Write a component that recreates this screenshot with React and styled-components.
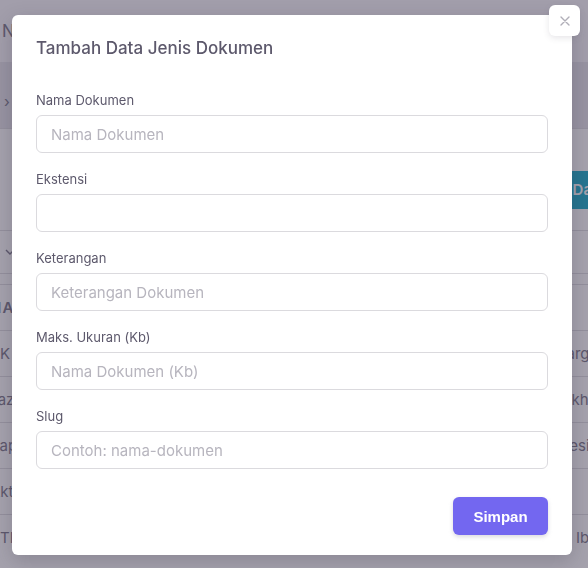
import React from 'react';
import styled, { createGlobalStyle } from 'styled-components';

const GlobalStyle = createGlobalStyle`
  html, body {
    margin: 0;
    padding: 0;
    overflow: hidden;
  }
  body {
    font-family: Inter, "Noto Sans", "Liberation Sans", sans-serif;
    background: #f8f7fa;
    color: #5d596c;
  }
  * { box-sizing: border-box; }
`;

const fields = [
  { label: 'Nama Dokumen', placeholder: 'Nama Dokumen' },
  { label: 'Ekstensi', placeholder: '' },
  { label: 'Keterangan', placeholder: 'Keterangan Dokumen' },
  { label: 'Maks. Ukuran (Kb)', placeholder: 'Nama Dokumen (Kb)' },
  { label: 'Slug', placeholder: 'Contoh: nama-dokumen' },
];

const rows = [
  { name: 'KK', desc: 'Kartu Keluarga' },
  { name: 'Ijazah', desc: 'Ijazah Terakhir' },
  { name: 'Rapor', desc: 'Rapor Indonesia' },
  { name: 'Akta', desc: '' },
  { name: 'KTP', desc: 'KTP Anak Ibu' },
];

// Page sitting behind the dialog
const Page = styled.div`
  width: 620px;
  margin-left: -10px;
  min-height: 568px;
  display: flex;
  flex-direction: column;
`;

const PageTitle = styled.div`
  height: 62px;
  display: flex;
  align-items: center;
  padding-left: 12px;
  font-size: 17px;
  color: #6f6b7d;
`;

const Breadcrumb = styled.div`
  height: 66px;
  display: flex;
  align-items: center;
  padding: 12px 0 0 14px;
  background: #e4e2e9;
  color: #6f6b7d;
  font-size: 15px;
`;

const Card = styled.div`
  background: #fff;
  flex: 1;
`;

const Toolbar = styled.div`
  height: 102px;
  display: flex;
  align-items: center;
  justify-content: space-between;
  padding-top: 20px;
  border-top: 1px solid #dbdade;
`;

const ToolbarText = styled.span`
  font-size: 15px;
  color: #6f6b7d;
`;

const TealButton = styled.button`
  height: 38px;
  margin-right: -12px;
  padding: 0 16px;
  border: none;
  border-radius: 6px;
  background: #00a5c4;
  color: #fff;
  font-family: inherit;
  font-size: 15px;
  font-weight: 600;
`;

const FilterRow = styled.div`
  height: 44px;
  display: flex;
  align-items: center;
  padding-left: 14px;
  border-top: 1px solid #dbdade;
  border-bottom: 1px solid #dbdade;
  color: #6f6b7d;
`;

const Table = styled.div`
  margin-top: 10px;
`;

const TableRow = styled.div`
  height: 46px;
  display: flex;
  align-items: center;
  justify-content: space-between;
  border-top: 1px solid #dbdade;
  font-size: 15px;
  font-weight: ${(p) => (p.$head ? 600 : 400)};
  letter-spacing: ${(p) => (p.$head ? '1px' : '0')};
  color: #6f6b7d;
`;

const Cell = styled.span`
  white-space: nowrap;
  margin-right: ${(p) => (p.$end ? '12px' : '0')};
`;

// Dialog
const Backdrop = styled.div`
  position: fixed;
  inset: 0;
  background: rgba(75, 70, 92, 0.5);
  display: flex;
  align-items: flex-start;
  padding: 15px 0 0 12px;
`;

const Dialog = styled.div`
  position: relative;
  width: 560px;
  height: 540px;
  background: #fff;
  border-radius: 6px;
  box-shadow: 0 6px 20px rgba(40, 36, 55, 0.22);
  padding: 20px 24px 20px;
  display: flex;
  flex-direction: column;
`;

const CloseButton = styled.button`
  position: absolute;
  top: -10px;
  right: -8px;
  width: 31px;
  height: 31px;
  border: none;
  border-radius: 6px;
  background: #fff;
  box-shadow: 0 2px 6px rgba(75, 70, 92, 0.14);
  display: flex;
  align-items: center;
  justify-content: center;
  padding: 0;
`;

const Title = styled.h5`
  margin: 0 0 30px;
  font-size: 17px;
  line-height: 26px;
  font-weight: 500;
  color: #5d596c;
`;

const Form = styled.form`
  flex: 1;
  display: flex;
  flex-direction: column;
`;

const Group = styled.div`
  display: flex;
  flex-direction: column;
  margin-bottom: 17px;
`;

const Label = styled.label`
  font-size: 13px;
  line-height: 18px;
  color: #5d596c;
  margin-bottom: 6px;
`;

const Input = styled.input`
  height: 38px;
  width: 100%;
  border: 1px solid #dbdade;
  border-radius: 6px;
  padding: 0 14px;
  font-family: inherit;
  font-size: 15px;
  color: #6f6b7d;
  background: #fff;
  outline: none;

  &::placeholder {
    color: #b7b5be;
  }
`;

const Footer = styled.div`
  margin-top: auto;
  display: flex;
  justify-content: flex-end;
`;

const SubmitButton = styled.button`
  height: 38px;
  width: 95px;
  border: none;
  border-radius: 6px;
  background: #7367f0;
  color: #fff;
  font-family: "Liberation Sans", Arial, sans-serif;
  font-size: 15px;
  font-weight: 700;
  box-shadow: 0 2px 4px rgba(165, 163, 174, 0.4);
`;

const App = () => (
  <>
    <GlobalStyle />
    <Page>
      <PageTitle>Nama Jenis Dokumen</PageTitle>
      <Breadcrumb>›</Breadcrumb>
      <Card>
        <Toolbar>
          <ToolbarText>n</ToolbarText>
          <TealButton>+ New Data</TealButton>
        </Toolbar>
        <FilterRow>
          <svg width="12" height="12" viewBox="0 0 12 12">
            <path d="M2 4l4 4 4-4" fill="none" stroke="#6f6b7d" strokeWidth="1.4" />
          </svg>
        </FilterRow>
        <Table>
          <TableRow $head>
            <Cell>NAMA</Cell>
            <Cell $end />
          </TableRow>
          {rows.map((r) => (
            <TableRow key={r.name}>
              <Cell>{r.name}</Cell>
              <Cell $end>{r.desc}</Cell>
            </TableRow>
          ))}
        </Table>
      </Card>
    </Page>

    <Backdrop>
      <Dialog>
        <CloseButton aria-label="Tutup">
          <svg width="10" height="10" viewBox="0 0 10 10">
            <path d="M1 1l8 8M9 1L1 9" stroke="#b0aeb8" strokeWidth="1.4" strokeLinecap="round" />
          </svg>
        </CloseButton>
        <Title>Tambah Data Jenis Dokumen</Title>
        <Form onSubmit={(e) => e.preventDefault()}>
          {fields.map((f) => (
            <Group key={f.label}>
              <Label>{f.label}</Label>
              <Input placeholder={f.placeholder} />
            </Group>
          ))}
          <Footer>
            <SubmitButton type="submit">Simpan</SubmitButton>
          </Footer>
        </Form>
      </Dialog>
    </Backdrop>
  </>
);

export default App;
